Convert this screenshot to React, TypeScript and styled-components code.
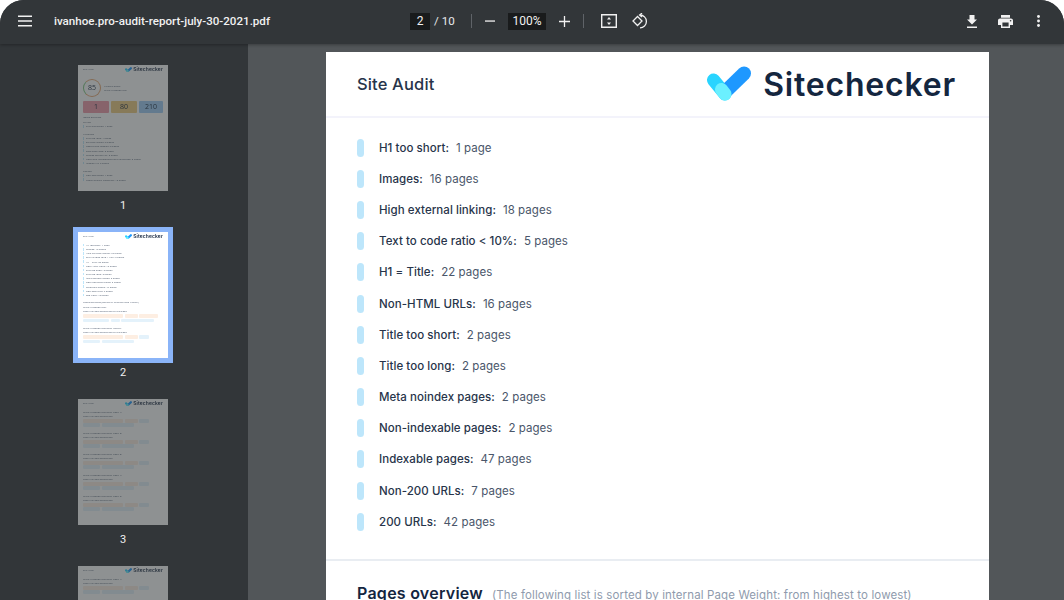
import React from "react";
import styled, { createGlobalStyle } from "styled-components";

const Global = createGlobalStyle`
  html, body { margin: 0; padding: 0; background: #fff; overflow: hidden; }
  #root { width: 1064px; height: 600px; }
`;

const Viewer = styled.div`
  width: 1064px;
  height: 600px;
  background: #323639;
  border-radius: 24px 24px 0 0;
  overflow: hidden;
  display: flex;
  flex-direction: column;
  font-family: Roboto, sans-serif;
`;

const Toolbar = styled.header`
  height: 44px;
  box-sizing: border-box;
  padding-bottom: 2px;
  flex: none;
  display: grid;
  grid-template-columns: 410px auto 1fr;
  align-items: center;
  background: #323639;
  color: #f1f1f1;
  box-shadow: 0 1px 3px rgba(0, 0, 0, 0.3);
  position: relative;
  z-index: 2;
`;

const ToolLeft = styled.div`
  display: flex;
  align-items: center;
  padding-left: 18px;
`;

const FileName = styled.span`
  margin-left: 22px;
  font-size: 11.6px;
  font-weight: 500;
  color: #f1f1f1;
`;

const ToolCenter = styled.div`
  display: flex;
  align-items: center;
`;

const ToolRight = styled.div`
  display: flex;
  justify-content: flex-end;
  align-items: center;
  padding-right: 24px;
`;

const NumBox = styled.span<{ $w: number; $ml?: number }>`
  width: ${(p) => p.$w}px;
  height: 17px;
  margin-left: ${(p) => p.$ml ?? 0}px;
  background: #191b1c;
  display: flex;
  align-items: center;
  justify-content: center;
  font-size: 12px;
  color: #f1f1f1;
`;

const Total = styled.span`
  margin-left: 4px;
  width: 20px;
  font-size: 11.6px;
  white-space: nowrap;
  color: #e8eaed;
`;

const Sep = styled.span<{ $ml: number }>`
  width: 1px;
  height: 14px;
  background: #5f6368;
  margin-left: ${(p) => p.$ml}px;
`;

const Icon = styled.svg<{ $ml?: number }>`
  display: block;
  flex: none;
  fill: #f1f1f1;
  margin-left: ${(p) => p.$ml ?? 0}px;
`;

const StrokeIcon = styled(Icon)`
  fill: none;
  stroke: #f1f1f1;
  stroke-width: 1.3;
`;

const Body = styled.div`
  flex: 1;
  min-height: 0;
  display: flex;
`;

const Side = styled.aside`
  width: 248px;
  box-sizing: border-box;
  flex: none;
  background: #323639;
  display: flex;
  flex-direction: column;
  align-items: center;
  padding: 16px 2px 0 0;
  overflow: hidden;
`;

const Thumb = styled.div`
  display: flex;
  flex-direction: column;
  align-items: center;
  flex: none;
  margin-bottom: 15px;
`;

const ThumbFrame = styled.div<{ $active?: boolean }>`
  width: 90px;
  height: 126px;
  background: #fff;
  border: 5px solid ${(p) => (p.$active ? "#8ab4f8" : "transparent")};
  background-clip: padding-box;
  position: relative;
  overflow: hidden;
`;

const ThumbDim = styled.div<{ $active?: boolean }>`
  position: absolute;
  inset: 0;
  background: ${(p) => (p.$active ? "transparent" : "rgba(50, 54, 57, 0.55)")};
`;

const ThumbInner = styled.div`
  padding: 0 5px;
  font-family: "Open Sans", sans-serif;
  font-size: 2.5px;
  line-height: 4.17px;
  color: #4d5a6e;
  filter: blur(0.4px);
`;

const ThumbHead = styled.div`
  display: flex;
  justify-content: space-between;
  align-items: center;
  height: 9px;
`;

const ThumbLogo = styled.span`
  font-family: Inter, sans-serif;
  font-size: 5px;
  font-weight: 600;
  letter-spacing: 0.1px;
  color: #16263f;
  display: flex;
  align-items: center;
  gap: 1px;
`;

const ThumbLine = styled.div<{ $mt?: number }>`
  display: flex;
  align-items: center;
  gap: 1.5px;
  height: 4.17px;
  white-space: nowrap;
  margin-top: ${(p) => p.$mt ?? 0}px;
`;

const ThumbDot = styled.i`
  width: 1.4px;
  height: 2.6px;
  background: #bde6fb;
  flex: none;
`;

const Chips = styled.div`
  display: flex;
  flex-wrap: wrap;
  gap: 0.7px 1.5px;
  margin-top: 0.8px;
`;

const Chip = styled.span<{ $warm?: boolean; $w: number }>`
  height: 3.6px;
  width: ${(p) => p.$w}px;
  background: ${(p) => (p.$warm ? "#fdeee2" : "#e4f2fb")};
  border-radius: 1px;
`;

const Score = styled.div`
  display: flex;
  align-items: center;
  gap: 3px;
  margin: 5px 0 4px;
`;

const Ring = styled.div`
  width: 18px;
  height: 18px;
  border-radius: 50%;
  box-sizing: border-box;
  border: 1px solid #e8a873;
  border-left-color: #7dc47d;
  display: flex;
  align-items: center;
  justify-content: center;
  font-size: 7px;
  color: #1c2a40;
`;

const Tiles = styled.div`
  display: flex;
  gap: 2px;
  margin-bottom: 2px;
`;

const Tile = styled.div<{ $bg: string; $w: number }>`
  width: ${(p) => p.$w}px;
  height: 12px;
  border-radius: 1px;
  background: ${(p) => p.$bg};
  display: flex;
  align-items: center;
  justify-content: center;
  font-size: 7px;
  color: #1c2a40;
`;

const ThumbBlock = styled.div`
  height: 21px;
`;

const ThumbList = styled.div<{ $mt: number }>`
  margin-top: ${(p) => p.$mt}px;
`;

const ThumbLabel = styled.span`
  margin-top: 3px;
  font-size: 11px;
  line-height: 13px;
  color: #f1f1f1;
`;

const Main = styled.main`
  flex: 1;
  min-width: 0;
  background: #525659;
  padding: 8px 75px 0 78px;
  overflow: hidden;
`;

const Page = styled.article`
  background: #fff;
  width: 663px;
  height: 600px;
  color: #1c2a40;
  font-family: Inter, sans-serif;
`;

const PageHead = styled.div`
  height: 64px;
  display: flex;
  align-items: center;
  justify-content: space-between;
  padding: 0 33px 0 31px;
  border-bottom: 2px solid #f3f3fb;
`;

const PageTitle = styled.h1`
  margin: 0;
  font-size: 16.5px;
  font-weight: 500;
  letter-spacing: 0.15px;
  color: #27344a;
`;

const Logo = styled.div`
  display: flex;
  align-items: center;
  gap: 12px;
`;

const LogoSvg = styled.svg`
  display: block;
  flex: none;
`;

const LogoText = styled.span`
  font-size: 32px;
  font-weight: 600;
  letter-spacing: 0.8px;
  color: #14263f;
`;

const Items = styled.ul`
  list-style: none;
  margin: 0;
  padding: 14px 31px 22px;
  border-bottom: 2px solid #e9edf2;
`;

const Item = styled.li`
  height: 31.2px;
  display: flex;
  align-items: center;
  font-size: 11.5px;
  letter-spacing: 0.05px;
`;

const Marker = styled.span`
  width: 7px;
  height: 18px;
  border-radius: 4px;
  background: #bde6fb;
  margin-right: 15px;
  flex: none;
`;

const ItemName = styled.span`
  font-weight: 500;
  color: #27344a;
  margin-right: 7px;
`;

const ItemValue = styled.span`
  color: #4a566a;
`;

const Overview = styled.div`
  padding: 22px 31px 0;
  display: flex;
  align-items: baseline;
  gap: 9px;
  white-space: nowrap;
`;

const OverviewTitle = styled.h2`
  margin: 0;
  font-size: 16px;
  font-weight: 600;
  letter-spacing: 0.25px;
  color: #14263f;
`;

const OverviewNote = styled.span`
  font-size: 11.5px;
  letter-spacing: 0.125px;
  color: #8f9bad;
`;

const items: [string, string][] = [
  ["H1 too short:", "1 page"],
  ["Images:", "16 pages"],
  ["High external linking:", "18 pages"],
  ["Text to code ratio < 10%:", "5 pages"],
  ["H1 = Title:", "22 pages"],
  ["Non-HTML URLs:", "16 pages"],
  ["Title too short:", "2 pages"],
  ["Title too long:", "2 pages"],
  ["Meta noindex pages:", "2 pages"],
  ["Non-indexable pages:", "2 pages"],
  ["Indexable pages:", "47 pages"],
  ["Non-200 URLs:", "7 pages"],
  ["200 URLs:", "42 pages"],
];

const LogoMark = ({ w }: { w: number }) => (
  <LogoSvg width={w} height={(w * 36) / 44} viewBox="0 0 44 36">
    <path d="M6.5 14 L18 28" stroke="#29d4ff" strokeWidth="13" strokeLinecap="round" />
    <path d="M20 24 L37 7.5" stroke="#1e98ff" strokeWidth="14" strokeLinecap="round" />
    <path d="M14.5 23.5 L18 28" stroke="#6bf0ff" strokeWidth="13" strokeLinecap="round" />
  </LogoSvg>
);

const ThumbHeader = () => (
  <ThumbHead>
    <span>Site Audit</span>
    <ThumbLogo>
      <LogoMark w={7} />
      Sitechecker
    </ThumbLogo>
  </ThumbHead>
);

const Thumb1 = () => (
  <ThumbInner>
    <ThumbHeader />
    <Score>
      <Ring>85</Ring>
      <div>
        <div>Website score</div>
        <div>https://ivanhoe.pro</div>
      </div>
    </Score>
    <Tiles>
      <Tile $bg="#f09aa8" $w={26}>1</Tile>
      <Tile $bg="#f0cc80" $w={26}>80</Tile>
      <Tile $bg="#9fcdf5" $w={24}>210</Tile>
    </Tiles>
    <ThumbLine $mt={1}>Issues overview</ThumbLine>
    <ThumbLine $mt={1}>Critical</ThumbLine>
    <ThumbLine><ThumbDot />Title duplicates: 1 page</ThumbLine>
    <ThumbLine $mt={3.5}>Warnings</ThumbLine>
    {["Title too long: 4 pages", "External linking: 3 pages", "Description missing: 3 pages", "Slow page load: 3 pages", "Images without alt: 3 pages", "URLs with underscores and uppercase: 3 pages", "Missing H2: 2 pages"].map((t) => (
      <ThumbLine key={t}><ThumbDot />{t}</ThumbLine>
    ))}
    <ThumbLine $mt={4}>Notices</ThumbLine>
    <ThumbLine><ThumbDot />Non-200 pages: 1 page</ThumbLine>
    <ThumbLine><ThumbDot />Pages without canonical: 12 pages</ThumbLine>
  </ThumbInner>
);

const Thumb2 = () => (
  <ThumbInner>
    <ThumbHeader />
    <ThumbList $mt={2}>
      {items.map(([a, b]) => (
        <ThumbLine key={a}><ThumbDot />{a} {b}</ThumbLine>
      ))}
    </ThumbList>
    <ThumbLine $mt={3}>Pages overview (sorted by internal Page Weight)</ThumbLine>
    <ThumbLine $mt={1}>https://ivanhoe.pro/</ThumbLine>
    <ThumbLine>Page title and description of this page</ThumbLine>
    <Chips>
      <Chip $warm $w={40} /><Chip $warm $w={13} /><Chip $warm $w={19} />
      <Chip $w={26} /><Chip $w={9} /><Chip $w={33} />
    </Chips>
    <ThumbLine $mt={4}>https://ivanhoe.pro/audit-report/</ThumbLine>
    <ThumbLine>Page title and description of this page</ThumbLine>
    <Chips>
      <Chip $warm $w={40} /><Chip $warm $w={13} /><Chip $w={10} />
      <Chip $w={17} /><Chip $w={32} />
    </Chips>
  </ThumbInner>
);

const Thumb3 = () => (
  <ThumbInner>
    <ThumbHeader />
    <ThumbList $mt={2}>
      {[1, 2, 3, 4, 5].map((i) => (
        <ThumbBlock key={i}>
          <ThumbLine>https://ivanhoe.pro/audit-page-{i}/</ThumbLine>
          <ThumbLine>Page title and description</ThumbLine>
          <Chips>
            <Chip $warm $w={40} /><Chip $warm $w={13} /><Chip $w={10} />
            <Chip $w={17} /><Chip $w={32} />
          </Chips>
        </ThumbBlock>
      ))}
    </ThumbList>
  </ThumbInner>
);

const ThumbPage = ({ n, active, children }: { n: number; active?: boolean; children: React.ReactNode }) => (
  <Thumb>
    <ThumbFrame $active={active}>
      {children}
      <ThumbDim $active={active} />
    </ThumbFrame>
    <ThumbLabel>{n}</ThumbLabel>
  </Thumb>
);

export default function App() {
  return (
    <>
      <Global />
      <Viewer>
        <Toolbar>
          <ToolLeft>
            <Icon width="14" height="12" viewBox="0 0 14 12">
              <path d="M0 0.5h14V2H0zM0 5.25h14v1.5H0zM0 10h14v1.5H0z" />
            </Icon>
            <FileName>ivanhoe.pro-audit-report-july-30-2021.pdf</FileName>
          </ToolLeft>
          <ToolCenter>
            <NumBox $w={20}>2</NumBox>
            <Total>/ 10</Total>
            <Sep $ml={17} />
            <Icon $ml={13} width="10" height="10" viewBox="0 0 10 10"><path d="M0 4.4h10v1.3H0z" /></Icon>
            <NumBox $w={38} $ml={13}>100%</NumBox>
            <Icon $ml={13} width="11" height="11" viewBox="0 0 11 11"><path d="M4.85 0h1.3v4.85H11v1.3H6.15V11h-1.3V6.15H0v-1.3h4.85z" /></Icon>
            <Sep $ml={13} />
            <Icon $ml={17} width="16" height="14" viewBox="0 0 16 14">
              <path fillRule="evenodd" d="M0 0h16v14H0zM1.4 1.4v11.2h13.2V1.4z" />
              <path d="M8 3l2 2.4H6zM8 11l-2-2.4h4z" />
            </Icon>
            <StrokeIcon $ml={15} width="16" height="16" viewBox="0 0 16 16">
              <path d="M5.5 3.5 L1 8 L5.5 12.5 L10 8 Z" />
              <path d="M8 2 A6.4 6.4 0 1 1 8 14.8" />
              <path d="M10 0.2 L7.6 2 L10 3.9" />
            </StrokeIcon>
          </ToolCenter>
          <ToolRight>
            <Icon width="10" height="13" viewBox="0 0 10 13">
              <path d="M2.5 0h5v4.5H10L5 9.5 0 4.5h2.5zM0 11.5h10V13H0z" />
            </Icon>
            <Icon $ml={21} width="15" height="13" viewBox="0 0 15 13">
              <path fillRule="evenodd" d="M3 0h9v2.8H3zM2 3.6h11c1.1 0 2 .9 2 2V10h-3v3H3v-3H0V5.6c0-1.1.9-2 2-2zM4.4 7.6v4h6.2v-4zM12.6 5a.8.8 0 1 0 0 1.6.8.8 0 0 0 0-1.6z" />
            </Icon>
            <Icon $ml={24} width="3" height="12" viewBox="0 0 3 12">
              <circle cx="1.5" cy="1.5" r="1.45" /><circle cx="1.5" cy="6" r="1.45" /><circle cx="1.5" cy="10.5" r="1.45" />
            </Icon>
          </ToolRight>
        </Toolbar>
        <Body>
          <Side>
            <ThumbPage n={1}><Thumb1 /></ThumbPage>
            <ThumbPage n={2} active><Thumb2 /></ThumbPage>
            <ThumbPage n={3}><Thumb3 /></ThumbPage>
            <ThumbPage n={4}><Thumb3 /></ThumbPage>
          </Side>
          <Main>
            <Page>
              <PageHead>
                <PageTitle>Site Audit</PageTitle>
                <Logo>
                  <LogoMark w={44} />
                  <LogoText>Sitechecker</LogoText>
                </Logo>
              </PageHead>
              <Items>
                {items.map(([name, value]) => (
                  <Item key={name}>
                    <Marker />
                    <ItemName>{name}</ItemName>
                    <ItemValue>{value}</ItemValue>
                  </Item>
                ))}
              </Items>
              <Overview>
                <OverviewTitle>Pages overview</OverviewTitle>
                <OverviewNote>(The following list is sorted by internal Page Weight: from highest to lowest)</OverviewNote>
              </Overview>
            </Page>
          </Main>
        </Body>
      </Viewer>
    </>
  );
}
